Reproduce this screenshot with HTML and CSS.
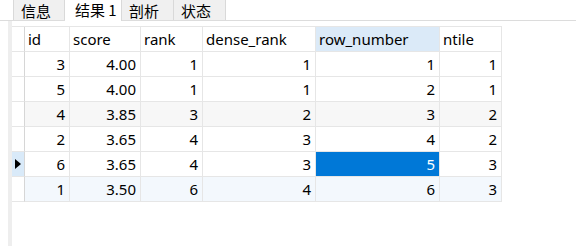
FILE: index.html
```html
<!DOCTYPE html>
<html>
<head>
<meta charset="utf-8">
<link rel="stylesheet" href="styles.css">
</head>
<body>
<div class="tabs">
  <div class="tab">信息</div>
  <div class="tab active">结果 1</div>
  <div class="tab">剖析</div>
  <div class="tab">状态</div>
</div>
<div class="main">
  <div class="strip"></div>
  <div class="grid">
    <div class="c ind h"></div>
    <div class="c h">id</div>
    <div class="c h">score</div>
    <div class="c h">rank</div>
    <div class="c h">dense_rank</div>
    <div class="c h sorted">row_number</div>
    <div class="c h">ntile</div>

    <div class="c ind"></div><div class="c n">3</div><div class="c n">4.00</div><div class="c n">1</div><div class="c n">1</div><div class="c n">1</div><div class="c n">1</div>
    <div class="c ind"></div><div class="c n">5</div><div class="c n">4.00</div><div class="c n">1</div><div class="c n">1</div><div class="c n">2</div><div class="c n">1</div>
    <div class="c ind"></div><div class="c n alt">4</div><div class="c n alt">3.85</div><div class="c n alt">3</div><div class="c n alt">2</div><div class="c n alt">3</div><div class="c n alt">2</div>
    <div class="c ind"></div><div class="c n">2</div><div class="c n">3.65</div><div class="c n">4</div><div class="c n">3</div><div class="c n">4</div><div class="c n">2</div>
    <div class="c ind cur"><svg width="6" height="10" viewBox="0 0 6 10"><polygon points="0,0 6,5 0,10" fill="#000"/></svg></div><div class="c n">6</div><div class="c n">3.65</div><div class="c n">4</div><div class="c n">3</div><div class="c n sel">5</div><div class="c n">3</div>
    <div class="c ind"></div><div class="c n hov">1</div><div class="c n hov">3.50</div><div class="c n hov">6</div><div class="c n hov">4</div><div class="c n hov">6</div><div class="c n hov">3</div>
  </div>
</div>
</body>
</html>
```

FILE: styles.css
```css
html, body {
  margin: 0;
  padding: 0;
  background: #ffffff;
  width: 576px;
  height: 246px;
  overflow: hidden;
  font-family: "Segoe UI", "Noto Sans", "Noto Sans CJK SC", sans-serif;
  font-size: 15px;
  color: #000;
}
.tabs {
  display: flex;
  height: 20px;
  padding-left: 13px;
  border-bottom: 1px solid #dcdcdc;
  box-sizing: content-box;
}
.tab {
  width: 52px;
  height: 20px;
  box-sizing: border-box;
  background: #f0f0f0;
  border-right: 1px solid #d9d9d9;
  font-family: "Noto Sans CJK SC", sans-serif;
  font-size: 15px;
  line-height: 21px;
  padding-left: 7px;
  white-space: nowrap;
}
.tab:first-child {
  border-left: 1px solid #d9d9d9;
}
.tab.active {
  background: #ffffff;
  width: 57px;
  line-height: 20px;
  height: 21px;
  margin-bottom: -1px;
  padding-left: 10px;
}
.main {
  display: flex;
  height: 225px;
}
.strip {
  margin-left: 8px;
  width: 4px;
  background: #eeeeee;
}
.grid {
  display: grid;
  grid-template-columns: 13px 45px 71px 62px 113px 124px 62px;
  grid-auto-rows: 25px;
  align-content: start;
  margin-top: 5px;
  border-top: 1px solid #e6e6e6;
}
.c {
  box-sizing: border-box;
  border-right: 1px solid #e6e6e6;
  border-bottom: 1px solid #e6e6e6;
  line-height: 24px;
  white-space: nowrap;
  padding: 0 4px;
}
.ind {
  border-right: 1px solid #d6d6d6;
  border-bottom: 1px solid #e6e6e6;
  padding: 0;
  display: flex;
  align-items: center;
  justify-content: center;
}
.h {
  padding-left: 3px;
}
.sorted {
  background: #dbeaf8;
}
.n {
  text-align: right;
  padding-right: 4px;
}
.alt {
  background: #f7f7f7;
}
.hov {
  background: #f3f8fd;
}
.cur {
  background: #d9eaf9;
}
.sel {
  background: #0078d7;
  color: #ffffff;
}
```
